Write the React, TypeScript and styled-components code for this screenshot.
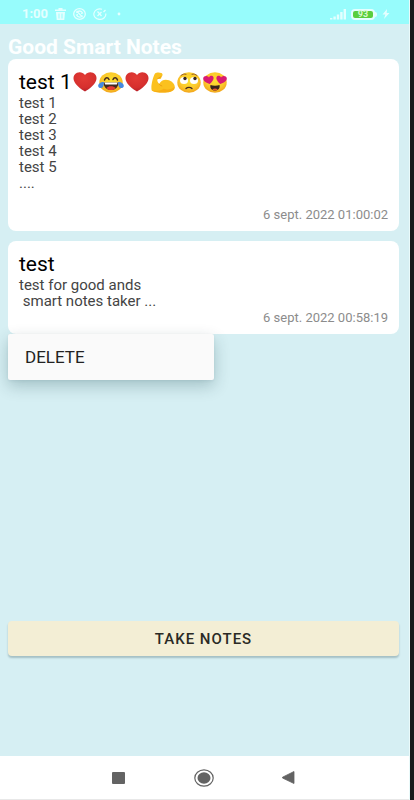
import React from "react";
import styled, { createGlobalStyle } from "styled-components";

const GlobalStyle = createGlobalStyle`
  * { box-sizing: border-box; }
  body { margin: 0; background: #1b1b1b; font-family: Roboto, "Liberation Sans", sans-serif; }
  h1, h2, p { margin: 0; font-weight: 400; }
  button { font-family: inherit; border: 0; padding: 0; cursor: pointer; }
`;

const Screen = styled.div`
  display: flex;
  flex-direction: column;
  min-height: 100vh;
  margin-right: 4px;
  background: #d6eff3;
  border-right: 1px solid #eafafa;
`;

const StatusBar = styled.header`
  display: flex;
  justify-content: space-between;
  align-items: center;
  height: 24px;
  padding: 4px 19px 0 22px;
  background: #97fcfc;
  color: #e4ffff;
`;

const StatusGroup = styled.div<{ $gap: number }>`
  display: flex;
  align-items: center;
  gap: ${(p) => p.$gap}px;
  svg { display: block; }
`;

const Clock = styled.time`
  font-size: 13px;
  line-height: 14px;
  font-weight: 700;
`;

const Main = styled.main`
  display: flex;
  flex: 1;
  flex-direction: column;
  padding: 12px 10px 100px 8px;
`;

const Heading = styled.h1`
  color: #fdffff;
  font-size: 21px;
  line-height: 23px;
  font-weight: 700;
`;

const NoteList = styled.div`
  display: flex;
  flex: 1;
  flex-direction: column;
  gap: 10px;
`;

const NoteSlot = styled.div`
  position: relative;
`;

const Card = styled.article<{ $tall?: boolean }>`
  display: flex;
  flex-direction: column;
  min-height: ${(p) => (p.$tall ? 172 : 93)}px;
  padding: 10px 11px 8px;
  border-radius: 8px;
  background: #fff;
`;

const NoteTitle = styled.h2`
  display: flex;
  align-items: center;
  color: #000;
  font-size: 21px;
  line-height: 26px;
`;

const Emojis = styled.span`
  display: flex;
  gap: 2px;
  margin-left: 1px;
  svg { display: block; }
`;

const NoteBody = styled.p`
  color: #444;
  font-size: 15px;
  line-height: 16px;
  white-space: pre-wrap;
`;

const NoteDate = styled.time`
  margin-top: auto;
  color: #8c8c8c;
  font-size: 13px;
  line-height: 16px;
  text-align: right;
`;

const Menu = styled.div`
  position: absolute;
  top: 100%;
  left: 0;
  width: 206px;
  border-radius: 2px;
  background: #fafafa;
  box-shadow: 0 6px 16px rgba(0, 50, 60, 0.24), 0 1px 3px rgba(0, 50, 60, 0.06);
`;

const MenuItem = styled.button`
  display: block;
  width: 100%;
  height: 46px;
  padding: 0 17px;
  background: none;
  color: #222;
  font-size: 17px;
  text-align: left;
`;

const TakeNotes = styled.button`
  height: 35px;
  border-radius: 4px;
  background: #f3eed5;
  box-shadow: 0 2px 2px rgba(0, 40, 50, 0.24);
  color: #2a2a25;
  font-size: 15px;
  font-weight: 500;
  letter-spacing: 1px;
`;

const NavBar = styled.nav`
  display: flex;
  justify-content: center;
  align-items: center;
  gap: 45px;
  height: 44px;
  padding-right: 2px;
  background: #fff;
  border-bottom: 1px solid #e8e8e8;
`;

const NavButton = styled.button`
  display: grid;
  place-items: center;
  width: 40px;
  height: 40px;
  background: none;
  color: #636363;
`;

const Heart = () => (
  <svg width="24" height="20" viewBox="0 0 24 20" role="img" aria-label="red heart">
    <defs>
      <radialGradient id="heart" cx="0.45" cy="0.3" r="0.75">
        <stop offset="0" stopColor="#e33b35" />
        <stop offset="0.65" stopColor="#d6302e" />
        <stop offset="1" stopColor="#b21f2a" />
      </radialGradient>
    </defs>
    <path d="M12 3C10 .2 6.7-.2 4 .8 1 2-.1 5.100.8 8.200 2.300 13 8 17 12 19.500 16 17 21.700 13 23.200 8.200 24.100 5.100 23 2 20 .8 17.300-.2 14 .2 12 3Z" fill="url(#heart)" />
  </svg>
);

const FaceBase = () => (
  <>
    <defs>
      <radialGradient id="face" cx="0.5" cy="0.4" r="0.6">
        <stop offset="0" stopColor="#fde030" />
        <stop offset="0.65" stopColor="#fbc92b" />
        <stop offset="1" stopColor="#f2a51c" />
      </radialGradient>
    </defs>
    <ellipse cx="12" cy="10.500" rx="11.700" ry="10.300" fill="url(#face)" />
  </>
);

const Joy = () => (
  <svg width="24" height="21" viewBox="0 0 24 21" overflow="visible" role="img" aria-label="face with tears of joy">
    <FaceBase />
    <path d="M5.500 8C6.500 5 9 5 10 7.500M14 7.500C15 5 17.500 5 18.500 8" fill="none" stroke="#442a21" strokeWidth="1.500" strokeLinecap="round" />
    <path d="M4.500 10.500h15c0 4.500-3 7.500-7.500 7.500s-7.500-3-7.500-7.500Z" fill="#442a21" />
    <path d="M5.500 10.500h13l-.7 2H6.200Z" fill="#fff" />
    <path d="M7.500 16c2-2.200 7-2.200 9 0-1.200 1.400-2.700 2-4.500 2s-3.300-.6-4.500-2Z" fill="#e73b35" />
    <path d="M5 10C1.500 9.800-1 12-.8 14c.3 2.600 3.800 2.700 5 .5.700-1.300.6-3 .8-4.500ZM19 10c3.500-.2 6 2 5.800 4-.3 2.600-3.800 2.700-5 .5-.7-1.300-.6-3-.8-4.500Z" fill="#4689df" />
  </svg>
);

const Biceps = () => (
  <svg width="24" height="21" viewBox="0 0 24 21" role="img" aria-label="flexed biceps">
    <path d="M4 1.500C5.500.2 8.500.2 10.300 1c1.700.8 1.500 2.500.4 3.500l-.7 2c-1 .8-2.500.7-3.500.3-.6 1.700.1 3.800 1.700 5.200C10 8 14 6.800 18 8.200c4.500 1.500 6.500 5.300 5.600 8.300-1 3.400-6.500 4-11.600 4-4.500 0-8.800 0-11-1.800C-.7 16.500 1.500 5.500 4 1.500Z" fill="#fbc11f" />
    <path d="M.8 18c4 1.700 9.500.5 12-1.300 3.800 1.700 8 .5 10.700-2-.1 4.600-4.500 5.800-11.500 5.800-4.500 0-9-.2-11.200-2.500Z" fill="#f7ae16" />
    <path d="M8.200 12c.5 1 1.500 1.700 2.600 1.900M10 4.700 6.500 6.800" fill="none" stroke="#e89a10" strokeWidth=".9" strokeLinecap="round" />
  </svg>
);

const RollingEyes = () => (
  <svg width="24" height="21" viewBox="0 0 24 21" role="img" aria-label="face with rolling eyes">
    <FaceBase />
    <ellipse cx="7" cy="8.500" rx="4" ry="3.600" fill="#fff" />
    <ellipse cx="17" cy="8.500" rx="4" ry="3.600" fill="#fff" />
    <circle cx="8" cy="6.500" r="1.700" fill="#38251e" />
    <circle cx="18" cy="6.500" r="1.700" fill="#38251e" />
    <path d="M4 3.500c1.500-1.300 3-1.700 5-1.200M15 2.300c2-.5 3.500-.1 5 1.200" fill="none" stroke="#8a5426" strokeWidth=".9" strokeLinecap="round" />
    <path d="M9 16.500c1.500-1.500 4.500-1.500 6 0" fill="none" stroke="#442a21" strokeWidth="1.300" strokeLinecap="round" />
  </svg>
);

const HeartEyes = () => (
  <svg width="24" height="21" viewBox="0 0 24 21" overflow="visible" role="img" aria-label="smiling face with heart eyes">
    <FaceBase />
    <path d="M6 5.500C4.500 3 .5 3.700.2 6.300-.1 9 3.500 11 6.700 12c2.300-2 4.600-4.700 3.700-7-.9-2.100-3.900-1.600-4.400.5ZM18 5.500c1.500-2.500 5.500-1.800 5.800.8.3 2.700-3.300 4.700-6.500 5.700-2.300-2-4.600-4.700-3.700-7 .9-2.100 3.900-1.600 4.400.5Z" fill="#d81b72" />
    <path d="M7.500 13c2.500 1 6.500 1 9 0 .8 3-1.200 5.500-4.500 5.500S6.700 16 7.500 13Z" fill="#38251e" />
    <path d="M9.300 17.500c1.300-1.200 4.100-1.200 5.400 0-1.500 1.300-3.900 1.300-5.400 0Z" fill="#e65a32" />
  </svg>
);

const TrashIcon = () => (
  <svg width="11" height="12" viewBox="0 0 11 12" fill="currentColor" aria-hidden="true">
    <path d="M3.500 0h4v1.500H11V3H0V1.500h3.500ZM1 4h9l-.7 8H1.700ZM3.500 5.500v5h1v-5Zm3 0v5h1v-5Z" fillRule="evenodd" />
  </svg>
);

const SyncIcon = () => (
  <svg width="13" height="12" viewBox="0 0 13 12" fill="none" stroke="currentColor" aria-hidden="true">
    <ellipse cx="6.500" cy="6" rx="5.800" ry="5.300" strokeWidth="1.300" />
    <path d="M3.500 5c1.500-2.800 5-2.500 6 0L8 5.500M9.500 7.500C8 9.800 5 9.500 3.500 7L5 6.500M3.500 3l6 6" strokeWidth="1.300" />
  </svg>
);

const DialIcon = () => (
  <svg width="14" height="12" viewBox="0 0 14 12" fill="none" stroke="currentColor" aria-hidden="true">
    <path d="M9 1.200A6 5.300 0 1 0 12.800 5.500" strokeWidth="1.200" />
    <path d="M4.500 3.500 8.500 8M4.500 8l4-4M10.500 4l2-2" strokeWidth="1.300" />
  </svg>
);

const SignalIcon = () => (
  <svg width="16" height="11" viewBox="0 0 16 11" fill="currentColor" aria-hidden="true">
    <path d="M0 9h2.400v1.500H0ZM3.400 7.500h2.400v3H3.400ZM6.800 5.500h2.400v5H6.800ZM10.200 3h2.400v7.500h-2.400ZM13.600 0H16v10.500h-2.400Z" />
  </svg>
);

const BatteryWrap = styled.div`
  display: flex;
  align-items: center;
`;

const BatteryShell = styled.span`
  display: grid;
  place-items: center;
  width: 24px;
  height: 11px;
  border: 2px solid #e4ffff;
  border-radius: 4px;
  background: #59ce3e;
  color: #d9f8cc;
  font-size: 9px;
  line-height: 7px;
  font-weight: 700;
`;

const BatteryTip = styled.span`
  width: 2px;
  height: 5px;
  border-radius: 0 2px 2px 0;
  background: #e4ffff;
`;

const BoltIcon = () => (
  <svg width="8" height="10" viewBox="0 0 8 10" fill="currentColor" aria-hidden="true">
    <path d="M5 0 .5 5.500h2.800L2 10l5.500-6H4.700Z" />
  </svg>
);

interface Note {
  title: string;
  emojis?: React.ReactNode;
  body: string;
  date: string;
  tall?: boolean;
  menuOpen?: boolean;
}

const notes: Note[] = [
  {
    title: "test 1",
    emojis: (
      <Emojis>
        <Heart />
        <Joy />
        <Heart />
        <Biceps />
        <RollingEyes />
        <HeartEyes />
      </Emojis>
    ),
    body: "test 1\ntest 2\ntest 3\ntest 4\ntest 5\n....",
    date: "6 sept. 2022 01:00:02",
    tall: true,
  },
  {
    title: "test",
    body: "test for good ands\n smart notes taker ...",
    date: "6 sept. 2022 00:58:19",
    menuOpen: true,
  },
];

export default function App() {
  return (
    <>
      <GlobalStyle />
      <Screen>
        <StatusBar>
          <StatusGroup $gap={7}>
            <Clock>1:00</Clock>
            <TrashIcon />
            <SyncIcon />
            <DialIcon />
            <svg width="12" height="4" viewBox="0 0 12 4" fill="currentColor" aria-hidden="true">
              <circle cx="5" cy="2" r="1.400" />
            </svg>
          </StatusGroup>
          <StatusGroup $gap={5}>
            <SignalIcon />
            <BatteryWrap>
              <BatteryShell>93</BatteryShell>
              <BatteryTip />
            </BatteryWrap>
            <BoltIcon />
          </StatusGroup>
        </StatusBar>
        <Main>
          <Heading>Good Smart Notes</Heading>
          <NoteList>
            {notes.map((note) => (
              <NoteSlot key={note.date}>
                <Card $tall={note.tall}>
                  <NoteTitle>
                    {note.title}
                    {note.emojis}
                  </NoteTitle>
                  <NoteBody>{note.body}</NoteBody>
                  <NoteDate>{note.date}</NoteDate>
                </Card>
                {note.menuOpen && (
                  <Menu role="menu">
                    <MenuItem type="button" role="menuitem">DELETE</MenuItem>
                  </Menu>
                )}
              </NoteSlot>
            ))}
          </NoteList>
          <TakeNotes type="button">TAKE NOTES</TakeNotes>
        </Main>
        <NavBar aria-label="System navigation">
          <NavButton type="button" aria-label="Recent apps">
            <svg width="13" height="12" viewBox="0 0 13 12" fill="currentColor">
              <rect width="13" height="12" rx="1" />
            </svg>
          </NavButton>
          <NavButton type="button" aria-label="Home">
            <svg width="20" height="18" viewBox="0 0 20 18" fill="currentColor">
              <ellipse cx="10" cy="9" rx="9.200" ry="8.200" fill="none" stroke="currentColor" strokeWidth="1.200" />
              <ellipse cx="10" cy="9" rx="6.500" ry="5.800" />
            </svg>
          </NavButton>
          <NavButton type="button" aria-label="Back">
            <svg width="13" height="13" viewBox="0 0 13 13" fill="currentColor">
              <path d="M12 .5v12L.5 7v-.8Z" stroke="currentColor" strokeWidth=".8" strokeLinejoin="round" />
            </svg>
          </NavButton>
        </NavBar>
      </Screen>
    </>
  );
}
